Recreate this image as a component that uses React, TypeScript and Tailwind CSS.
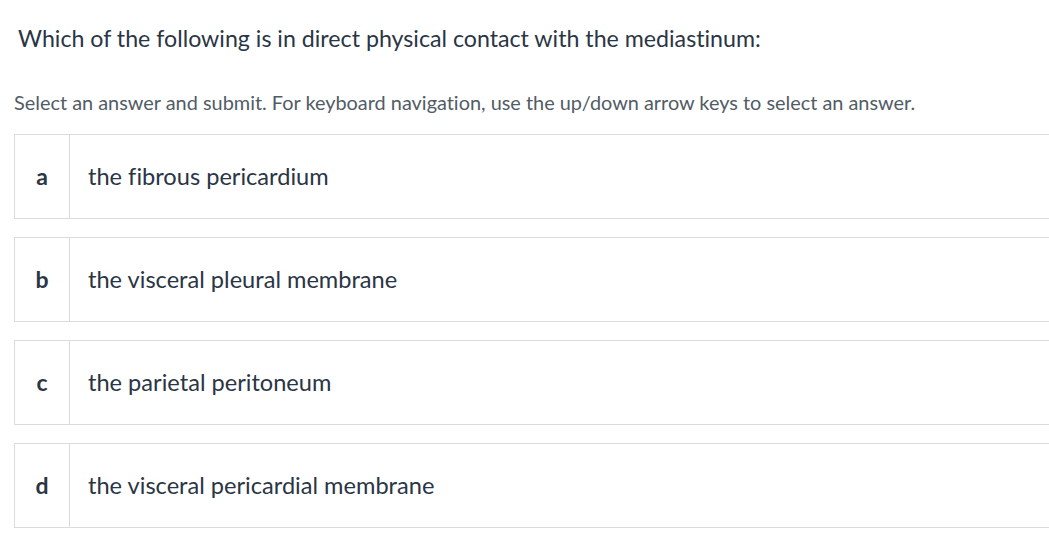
import React from "react";

const options = [
  { k: "a", t: "the fibrous pericardium" },
  { k: "b", t: "the visceral pleural membrane" },
  { k: "c", t: "the parietal peritoneum" },
  { k: "d", t: "the visceral pericardial membrane" },
];

export default function App() {
  return (
    <div
      className="w-[1049px] h-[539px] overflow-hidden bg-white [font-variant-ligatures:none]"
      style={{ fontFamily: "Lato, 'Noto Sans', sans-serif" }}
    >
      <div className="pl-[14px] pt-[21px]">
        <h1 className="pl-[4px] text-[23.2px] leading-[34px] text-[#2a3545] font-normal">
          Which of the following is in direct physical contact with the mediastinum:
        </h1>
        <p className="mt-[34px] text-[19.9px] leading-[26px] text-[#525c66]">
          Select an answer and submit. For keyboard navigation, use the up/down arrow keys to select an answer.
        </p>
        <div className="mt-[19px] flex flex-col gap-[18px] w-[1045px]">
          {options.map((o) => (
            <div key={o.k} className="flex h-[85px] border border-[#dcdcdc]">
              <div className="w-[55px] shrink-0 flex items-center justify-center border-r border-[#dcdcdc] text-[23px] font-bold text-[#2a3545]">
                {o.k}
              </div>
              <div className="flex items-center pl-[18px] text-[23.6px] text-[#2a3545]">
                {o.t}
              </div>
            </div>
          ))}
        </div>
      </div>
    </div>
  );
}
